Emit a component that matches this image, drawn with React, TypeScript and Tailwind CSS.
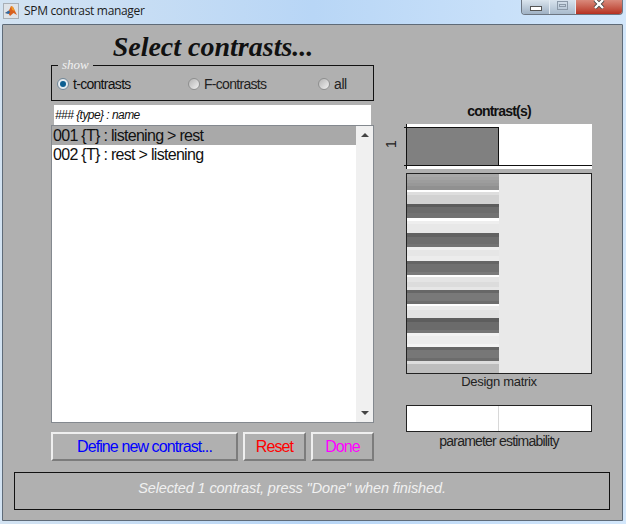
const matrix: [number, string][] = [
  [3, '#a8a8a8'], [3, '#a3a3a3'], [3, '#9d9d9d'], [3, '#989898'], [4, '#909090'],
  [2, '#ffffff'], [3, '#dedede'], [9, '#d2d2d2'],
  [3, '#5c5c5c'], [6, '#6c6c6c'], [5, '#727272'],
  [3, '#ffffff'], [3, '#eeeeee'], [9, '#e8e8e8'],
  [4, '#626262'], [7, '#6e6e6e'], [3, '#747474'],
  [3, '#f0f0f0'], [6, '#e6e6e6'], [5, '#ececec'],
  [3, '#656565'], [8, '#707070'], [3, '#7a7a7a'],
  [2, '#ffffff'], [5, '#e4e4e4'], [5, '#dcdcdc'], [3, '#e6e6e6'],
  [3, '#676767'], [8, '#797979'], [3, '#6e6e6e'],
  [2, '#ffffff'], [4, '#ebebeb'], [8, '#e2e2e2'],
  [4, '#5d5d5d'], [8, '#6b6b6b'], [3, '#757575'],
  [3, '#f2f2f2'], [8, '#ececec'], [3, '#f4f4f4'],
  [3, '#666666'], [8, '#777777'], [3, '#6c6c6c'],
  [3, '#dddddd'], [9, '#bdbdbd'],
];

const DesignMatrix = () => {
  let y = 0;
  return (
    <svg width="184" height="199" className="block">
      <rect width="184" height="199" fill="#e9e9e9" />
      {matrix.map(([h, fill], i) => {
        const top = y;
        y += h;
        return <rect key={i} x="0" y={top} width="92" height={h} fill={fill} />;
      })}
    </svg>
  );
};

const Radio = ({ on }: { on?: boolean }) => (
  <span className={`flex h-[12px] w-[12px] shrink-0 items-center justify-center rounded-full border ${on ? 'border-[#6f8596] bg-[#e4ebf0]' : 'border-[#8e8f8f] bg-gradient-to-br from-[#b4b4b4] to-[#f2f2f2]'}`}>
    {on && <span className="h-[6px] w-[6px] rounded-full bg-[#0c5f92]" />}
  </span>
);

const ActionButton = ({ label, color, width }: { label: string; color: string; width: string }) => (
  <button className={`h-[29px] ${width} ${color} border-2 border-t-[#efefef] border-l-[#efefef] border-r-[#7c7c7c] border-b-[#7c7c7c] text-[16px] tracking-[-0.9px]`}>
    {label}
  </button>
);

const MatlabIcon = () => (
  <svg width="16" height="16" viewBox="0 0 16 16" className="shrink-0">
    <rect x="0.5" y="0.5" width="15" height="15" fill="#dfe3e8" stroke="#a9afb6" />
    <path d="M2 10 L6 7.5 L8 3 L10 4 L14 12 L10.5 10 L7 13 L5.5 10.5 Z" fill="#d8601f" />
    <path d="M2 10 L6 7.5 L7 9.5 L5.5 11 Z" fill="#2a6cab" />
    <path d="M8 3 L10 4 L12 8 L9 7 Z" fill="#f09a2a" />
  </svg>
);

export default function App() {
  return (
    <div className="flex h-[524px] w-[626px] flex-col overflow-hidden bg-gradient-to-r from-[#d3e3f2] via-[#b8d6f6] to-[#d3e7fb] font-['Liberation_Sans',sans-serif]">
      {/* title bar */}
      <div className="flex h-[24px] shrink-0 items-start justify-between pl-[3px] pr-[3px]">
        <div className="flex h-[20px] items-center gap-[5px] pt-[2px]">
          <MatlabIcon />
          <span className="font-['Open_Sans',sans-serif] text-[12px] tracking-[-0.32px] text-[#1c1c1c]">SPM contrast manager</span>
        </div>
        <div className="flex h-[15px] w-[102px] overflow-hidden rounded-b-[4px] border border-t-0 border-[#6d7682]">
          <div className="flex w-[28px] items-center justify-center border-r border-[#e3ebf3] bg-gradient-to-b from-[#dbe5ee] to-[#9fb1c4]">
            <span className="mt-[3px] h-[5px] w-[12px] border border-[#555] bg-white" />
          </div>
          <div className="flex w-[26px] items-center justify-center border-r border-[#e3ebf3] bg-gradient-to-b from-[#d8e3ed] to-[#a9bbcd]">
            <span className="mt-[-4px] flex h-[9px] w-[11px] items-center justify-center border border-[#8b99a8]">
              <span className="h-[3px] w-[7px] border border-[#8b99a8]" />
            </span>
          </div>
          <div className="flex flex-1 items-start justify-center bg-gradient-to-b from-[#d9897b] to-[#b52f20]">
            <svg width="12" height="9" viewBox="0 0 12 9">
              <path d="M2 0 L10 8 M10 0 L2 8" stroke="#4b4b4b" strokeWidth="4" />
              <path d="M2 0 L10 8 M10 0 L2 8" stroke="#ffffff" strokeWidth="2.4" />
            </svg>
          </div>
        </div>
      </div>

      {/* client area */}
      <div className="ml-[2px] mr-[3px] flex h-[497px] flex-col rounded-t-[1px] border border-[#5f6b78] bg-[#b0b0b0] pl-[11px] pr-[12px]">
        <div className="flex h-[447px] shrink-0">
          {/* left column */}
          <div className="ml-[37px] flex w-[323px] flex-col">
            <h1 className="mt-[5px] h-[35px] pl-[1px] text-center font-['Liberation_Serif',serif] text-[28px] font-bold italic leading-[33px] text-[#111]">
              Select contrasts...
            </h1>
            <div className="relative flex h-[36px] items-center border border-[#111] pl-[5px] pt-[2px]">
              <span className="absolute left-[6px] top-[-9px] bg-[#b0b0b0] px-[4px] font-['Liberation_Serif',serif] text-[13px] italic leading-[16px] text-[#f0f0f0]">
                show
              </span>
              <label className="flex w-[131px] items-center gap-[4px] text-[14px] tracking-[-0.7px] text-[#111]">
                <Radio on /> t-contrasts
              </label>
              <label className="flex w-[130px] items-center gap-[4px] text-[14px] tracking-[-0.7px] text-[#222]">
                <Radio /> F-contrasts
              </label>
              <label className="flex items-center gap-[4px] text-[14px] tracking-[-0.4px] text-[#222]">
                <Radio /> all
              </label>
            </div>
            <div className="mx-[3px] mt-[4px] flex h-[20px] items-center bg-white pl-[1px] text-[12px] italic tracking-[-0.55px] text-[#111]">
              ### {'{type}'} : name
            </div>
            <div className="flex h-[298px] border border-[#84898f] bg-white">
              <div className="flex-1 text-[16px] leading-[19px] tracking-[-0.7px] text-[#111]">
                <div className="h-[19px] bg-[#a9a9a9] pl-[1px]">001 {'{T}'} : listening &gt; rest</div>
                <div className="pl-[1px]">002 {'{T}'} : rest &gt; listening</div>
              </div>
              <div className="flex w-[17px] flex-col items-center justify-between bg-[#f0f0f0] py-[7px]">
                <span className="h-0 w-0 border-x-[4px] border-b-[4px] border-x-transparent border-b-[#444]" />
                <span className="h-0 w-0 border-x-[4px] border-t-[4px] border-x-transparent border-t-[#444]" />
              </div>
            </div>
            <div className="mt-[9px] flex gap-[5px]">
              <ActionButton label="Define new contrast..." color="text-[#0000ff]" width="w-[187px]" />
              <ActionButton label="Reset" color="text-[#ff0000]" width="w-[63px]" />
              <ActionButton label="Done" color="text-[#ff00ff]" width="w-[63px]" />
            </div>
          </div>

          {/* right column */}
          <div className="relative ml-[32px] flex w-[186px] flex-col pt-[78px]">
            <div className="h-[21px] text-center text-[14px] font-bold leading-[16px] tracking-[-0.8px] text-[#111]">contrast(s)</div>
            <span className="absolute left-[-19px] top-[111px] -rotate-90 text-[14px] leading-[16px] text-[#222]">1</span>
            <div className="relative flex h-[45px] flex-col border-l border-[#111] bg-white pt-[3px]">
              <span className="absolute left-[-3px] top-[3px] h-px w-[3px] bg-[#111]" />
              <span className="absolute left-[-3px] top-[41px] h-px w-[3px] bg-[#111]" />
              <div className="flex h-[39px] border-b border-[#111]">
                <div className="h-full w-[92px] border-r border-t border-[#111] bg-[#808080]" />
              </div>
            </div>
            <div className="mt-[4px] h-[201px] w-[186px] border border-[#222]">
              <DesignMatrix />
            </div>
            <div className="h-[18px] text-center text-[13px] leading-[16px] tracking-[-0.3px] text-[#222]">Design matrix</div>
            <div className="mt-[13px] flex h-[27px] border border-[#222] bg-white">
              <div className="w-[92px] border-r border-[#d8d8d8]" />
            </div>
            <div className="mt-[1px] text-center text-[14px] leading-[16px] tracking-[-0.8px] text-[#222]">parameter estimability</div>
          </div>
        </div>

        {/* status */}
        <div className="flex h-[38px] shrink-0 items-center justify-center border border-[#111] pb-[4px] pr-[40px] text-[14.5px] italic tracking-[-0.12px] text-[#f0f0f0]">
          Selected 1 contrast, press "Done" when finished.
        </div>
      </div>
    </div>
  );
}
